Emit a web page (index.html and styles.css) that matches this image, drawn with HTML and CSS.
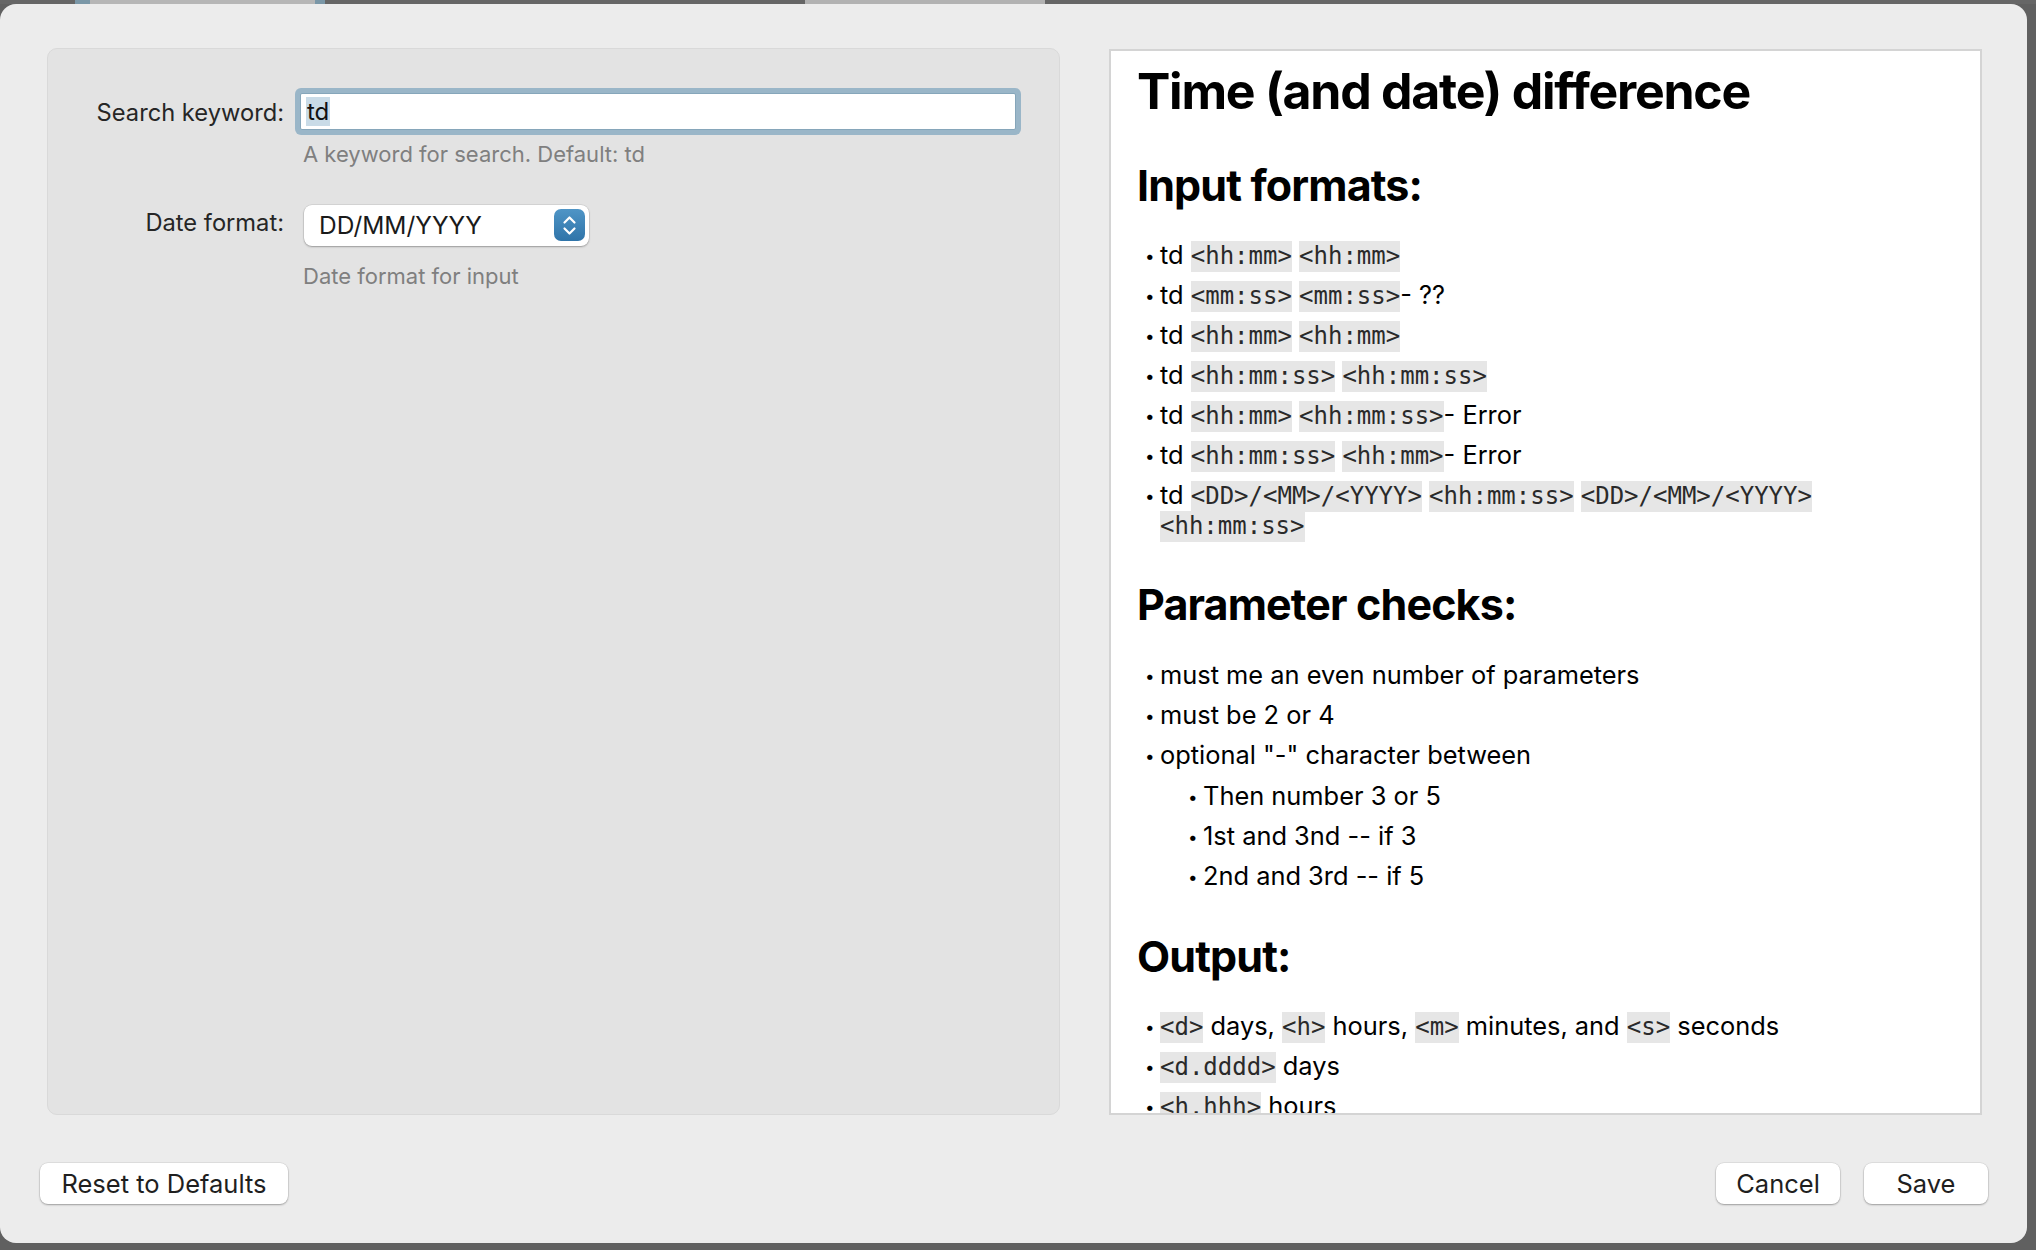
FILE: index.html
```html
<!DOCTYPE html>
<html lang="en">
<head>
<meta charset="utf-8">
<title>Time (and date) difference – Settings</title>
<link rel="stylesheet" href="styles.css">
</head>
<body>
<div class="window">
  <div class="main">
    <section class="settings">
      <div class="row row-keyword">
        <label class="label label-keyword" for="kw">Search keyword:</label>
        <div class="field">
          <div class="textbox" id="kw"><span class="selected">td</span></div>
          <div class="help help-keyword">A keyword for search. Default: td</div>
        </div>
      </div>
      <div class="row row-date">
        <label class="label label-date">Date format:</label>
        <div class="field">
          <div class="select">
            <span class="select-value">DD/MM/YYYY</span>
            <span class="stepper">
              <svg width="31" height="32" viewBox="0 0 31 32" aria-hidden="true">
                <path d="M10.5 13.5 L15.5 8.5 L20.5 13.5" fill="none" stroke="#fff" stroke-width="2.2" stroke-linecap="round" stroke-linejoin="round"/>
                <path d="M10.5 19.5 L15.5 24.5 L20.5 19.5" fill="none" stroke="#fff" stroke-width="2.2" stroke-linecap="round" stroke-linejoin="round"/>
              </svg>
            </span>
          </div>
          <div class="help help-date">Date format for input</div>
        </div>
      </div>
    </section>

    <section class="doc">
      <h1>Time (and date) difference</h1>
      <h2 class="h2-input">Input formats:</h2>
      <ul>
        <li>td <code>&lt;hh:mm&gt;</code> <code>&lt;hh:mm&gt;</code></li>
        <li>td <code>&lt;mm:ss&gt;</code> <code>&lt;mm:ss&gt;</code>- ??</li>
        <li>td <code>&lt;hh:mm&gt;</code> <code>&lt;hh:mm&gt;</code></li>
        <li>td <code>&lt;hh:mm:ss&gt;</code> <code>&lt;hh:mm:ss&gt;</code></li>
        <li>td <code>&lt;hh:mm&gt;</code> <code>&lt;hh:mm:ss&gt;</code>- Error</li>
        <li>td <code>&lt;hh:mm:ss&gt;</code> <code>&lt;hh:mm&gt;</code>- Error</li>
        <li>td <code>&lt;DD&gt;/&lt;MM&gt;/&lt;YYYY&gt;</code> <code>&lt;hh:mm:ss&gt;</code> <code>&lt;DD&gt;/&lt;MM&gt;/&lt;YYYY&gt;</code> <code>&lt;hh:mm:ss&gt;</code></li>
      </ul>
      <h2 class="h2-checks">Parameter checks:</h2>
      <ul class="list-checks">
        <li>must me an even number of parameters</li>
        <li>must be 2 or 4</li>
        <li>optional "-" character between
          <ul class="nested">
            <li>Then number 3 or 5</li>
            <li>1st and 3nd -- if 3</li>
            <li>2nd and 3rd -- if 5</li>
          </ul>
        </li>
      </ul>
      <h2 class="h2-output">Output:</h2>
      <ul>
        <li><code>&lt;d&gt;</code> days, <code>&lt;h&gt;</code> hours, <code>&lt;m&gt;</code> minutes, and <code>&lt;s&gt;</code> seconds</li>
        <li><code>&lt;d.dddd&gt;</code> days</li>
        <li><code>&lt;h.hhh&gt;</code> hours</li>
      </ul>
    </section>
  </div>

  <div class="footer">
    <button class="btn btn-reset" type="button">Reset to Defaults</button>
    <div class="actions">
      <button class="btn btn-action" type="button">Cancel</button>
      <button class="btn btn-action" type="button">Save</button>
    </div>
  </div>
</div>
</body>
</html>
```

FILE: styles.css
```css
* { box-sizing: border-box; }

html, body {
  margin: 0;
  padding: 0;
}

body {
  width: 2036px;
  height: 1250px;
  overflow: hidden;
  padding-top: 4px;
  font-family: "Inter", "Noto Sans", sans-serif;
  color: #1d1d1d;
  background:
    linear-gradient(to right,
      #666 0 75px, #7a97a7 75px 90px, #b6b6b6 90px 315px, #7a97a7 315px 325px,
      #666 325px 805px, #b2b2b2 805px 1045px, #666 1045px) top left / 100% 4px no-repeat,
    #606060;
}

.window {
  width: 2027px;
  height: 1239px;
  background: #ececec;
  border-radius: 16px;
  padding-top: 44px;
  display: flex;
  flex-direction: column;
}

.main {
  display: flex;
  gap: 49px;
  height: 1067px;
  margin: 0 45px 0 47px;
}

/* ---------- left settings panel ---------- */
.settings {
  width: 1013px;
  flex: none;
  background: #e3e3e3;
  border: 1px solid #d9d9d9;
  border-radius: 10px;
  padding: 44px 43px 0 0;
}

.row {
  display: flex;
  gap: 16px;
}

.row-date {
  margin-top: 38px;
}

.label {
  width: 236px;
  flex: none;
  text-align: right;
  font-size: 23.7px;
  color: #262626;
}

.label-keyword { line-height: 40px; }
.label-date { line-height: 36px; }

.field {
  flex: 1;
}

.textbox {
  height: 37px;
  background: #fff;
  border: 1px solid #86a6ba;
  border-radius: 2px;
  box-shadow: 0 0 0 5px #9ab6c8;
  padding: 3px 0 0 5px;
  font-size: 24px;
  line-height: 29px;
  color: #111;
}

.selected {
  background: #c9dbe7;
  display: inline-block;
  padding: 0 1px;
}

.help {
  font-size: 22px;
  line-height: 26px;
  color: #7f7f7f;
  padding-left: 3px;
}

.help-keyword { margin-top: 11px; }
.help-date { margin-top: 17px; }

.select {
  width: 285px;
  height: 41px;
  margin-left: 4px;
  background: #fff;
  border-radius: 8px;
  box-shadow: 0 0 0 0.5px rgba(0,0,0,0.12), 0 1px 2px rgba(0,0,0,0.28);
  display: flex;
  align-items: center;
  justify-content: space-between;
  padding: 0 4px 1px 15px;
  font-size: 24.5px;
  color: #1a1a1a;
}

.stepper {
  width: 31px;
  height: 32px;
  border-radius: 7px;
  background: linear-gradient(#4f95c6, #2f74a9);
  display: flex;
}

/* ---------- right documentation panel ---------- */
.doc {
  flex: 1;
  background: #fff;
  border: 2px solid #d4d4d4;
  margin-top: 1px;
  height: 1066px;
  overflow: hidden;
  padding: 10px 26px 0 26px;
  color: #000;
  font-size: 25.4px;
}

.doc h1 {
  margin: 0;
  font-size: 50px;
  line-height: 60px;
  font-weight: 700;
  letter-spacing: -0.025em;
}

.doc h2 {
  margin: 38px 0 0;
  font-size: 43px;
  line-height: 50px;
  font-weight: 700;
  letter-spacing: -0.02em;
}

.doc h2.h2-input { margin-top: 39px; }
.doc h2.h2-checks { margin-top: 39px; }
.doc h2.h2-output { margin-top: 40px; }

.doc ul {
  list-style: none;
  margin: 30px 0 0;
  padding: 0 0 0 23px;
}

.doc ul.list-checks { margin-top: 31px; }

.doc ul.nested {
  margin: 11px 0 0;
  padding-left: 43px;
}

.doc li {
  line-height: 30px;
}

.doc li + li {
  margin-top: 10px;
}

.doc li::before {
  content: "•";
  display: inline-block;
  width: 15px;
  margin-left: -15px;
  font-size: 17px;
  line-height: 16px;
  vertical-align: 2px;
}

.doc code {
  font-family: "DejaVu Sans Mono", "Liberation Mono", monospace;
  font-size: 24px;
  line-height: 20px;
  background: #e6e6e6;
  color: #2a2a2a;
  padding: 1px 0 2px;
}

/* ---------- footer buttons ---------- */
.footer {
  margin-top: 48px;
  padding: 0 39px 0 40px;
  display: flex;
  justify-content: space-between;
}

.actions {
  display: flex;
  gap: 24px;
}

.btn {
  height: 41px;
  border: none;
  background: #fff;
  border-radius: 8px;
  box-shadow: 0 0 0 0.5px rgba(0,0,0,0.1), 0 1px 2px rgba(0,0,0,0.3);
  font-family: "Inter", "Noto Sans", sans-serif;
  font-size: 25.5px;
  color: #1f1f1f;
  padding: 0 10px;
}

.btn-reset { width: 248px; }
.btn-action { width: 124px; }
```
